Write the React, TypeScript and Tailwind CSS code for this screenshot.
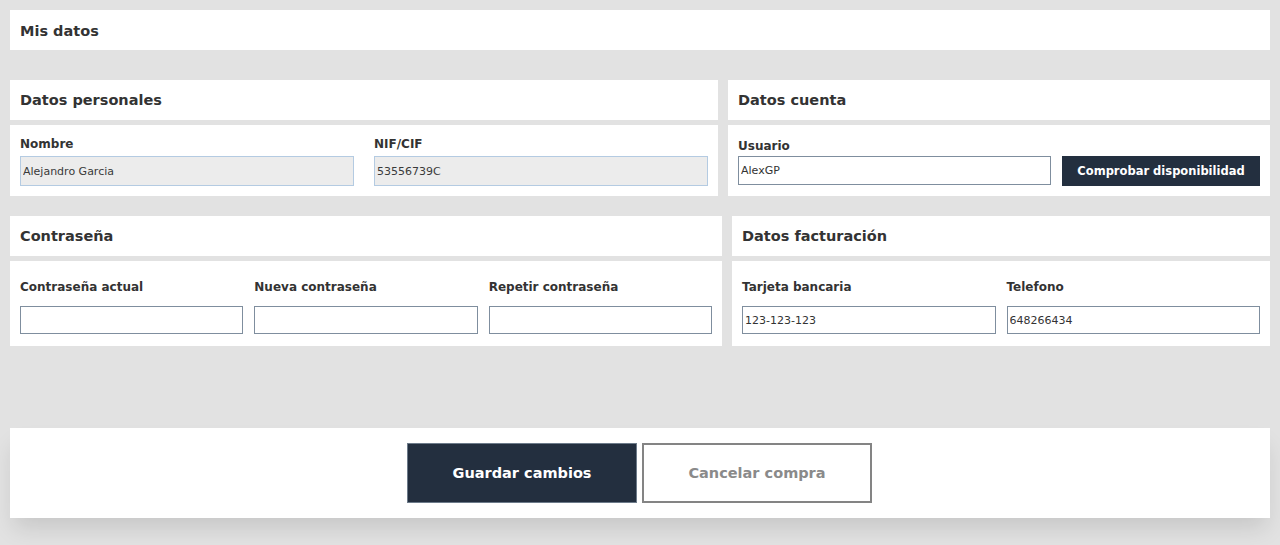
import React from 'react';

const font = { fontFamily: '"DejaVu Sans", "Liberation Sans", sans-serif' };

const Label = ({ children }: { children: React.ReactNode }) => (
  <label className="block text-[12px] font-bold text-[#333] leading-[16px]">{children}</label>
);

const ReadInput = ({ value }: { value: string }) => (
  <input
    readOnly
    value={value}
    className="block w-full h-[30px] border border-[#b4cbe2] bg-[#ececec] px-[2px] text-[11px] text-[#3a3a3a] outline-none"
  />
);

const TextInput = ({ value = '', h = 'h-[28px]' }: { value?: string; h?: string }) => (
  <input
    defaultValue={value}
    className={`block w-full ${h} border border-[#7f8e9e] bg-white px-[2px] text-[11px] text-[#333] outline-none`}
  />
);

const Title = ({ children }: { children: React.ReactNode }) => (
  <div className="bg-white h-[40px] flex items-center px-[10px] pt-[2px]">
    <h2 className="text-[14.5px] font-bold text-[#333]">{children}</h2>
  </div>
);

export default function App() {
  return (
    <div className="min-h-[545px] bg-[#e2e2e2] p-[10px] overflow-hidden" style={font}>
      <div className="bg-white h-[40px] flex items-center px-[10px] pt-[3px]">
        <h1 className="text-[14.5px] font-bold text-[#333]">Mis datos</h1>
      </div>

      {/* fila 1 */}
      <div className="flex gap-[10px] mt-[30px]">
        <div className="w-[708px]">
          <Title>Datos personales</Title>
          <div className="bg-white mt-[5px] px-[10px] pt-[11px] pb-[10px] grid grid-cols-2 gap-x-[20px]">
            <div>
              <Label>Nombre</Label>
              <div className="mt-[4px]">
                <ReadInput value="Alejandro Garcia" />
              </div>
            </div>
            <div>
              <Label>NIF/CIF</Label>
              <div className="mt-[4px]">
                <ReadInput value="53556739C" />
              </div>
            </div>
          </div>
        </div>
        <div className="flex-1">
          <Title>Datos cuenta</Title>
          <div className="bg-white mt-[5px] px-[10px] pt-[13px] pb-[10px]">
            <Label>Usuario</Label>
            <div className="mt-[2px] flex gap-[11px]">
              <div className="w-[313px]">
                <TextInput value="AlexGP" h="h-[29px]" />
              </div>
              <button className="flex-1 h-[30px] bg-[#232f3f] text-white text-[11.5px] font-bold pt-[1px]">
                Comprobar disponibilidad
              </button>
            </div>
          </div>
        </div>
      </div>

      {/* fila 2 */}
      <div className="flex gap-[10px] mt-[20px]">
        <div className="w-[712px]">
          <Title>Contraseña</Title>
          <div className="bg-white mt-[5px] px-[10px] pt-[18px] pb-[12px] grid grid-cols-3 gap-x-[11px]">
            {['Contraseña actual', 'Nueva contraseña', 'Repetir contraseña'].map((l) => (
              <div key={l}>
                <Label>{l}</Label>
                <div className="mt-[11px]">
                  <TextInput />
                </div>
              </div>
            ))}
          </div>
        </div>
        <div className="flex-1">
          <Title>Datos facturación</Title>
          <div className="bg-white mt-[5px] px-[10px] pt-[18px] pb-[12px] grid grid-cols-2 gap-x-[11px]">
            <div>
              <Label>Tarjeta bancaria</Label>
              <div className="mt-[11px]">
                <TextInput value="123-123-123" />
              </div>
            </div>
            <div>
              <Label>Telefono</Label>
              <div className="mt-[11px]">
                <TextInput value="648266434" />
              </div>
            </div>
          </div>
        </div>
      </div>

      {/* pie */}
      <div className="bg-white mt-[82px] py-[15px] flex justify-center gap-[5px] pr-[1px] shadow-[0_14px_22px_-4px_rgba(0,0,0,0.12)]">
        <button className="w-[230px] h-[60px] bg-[#232f3f] border border-[#6d7b8a] text-white text-[14.5px] font-bold pt-[2px]">
          Guardar cambios
        </button>
        <button className="w-[230px] h-[60px] bg-white border-2 border-[#848484] text-[#8a8a8a] text-[14.5px] font-bold pt-[2px]">
          Cancelar compra
        </button>
      </div>
    </div>
  );
}
